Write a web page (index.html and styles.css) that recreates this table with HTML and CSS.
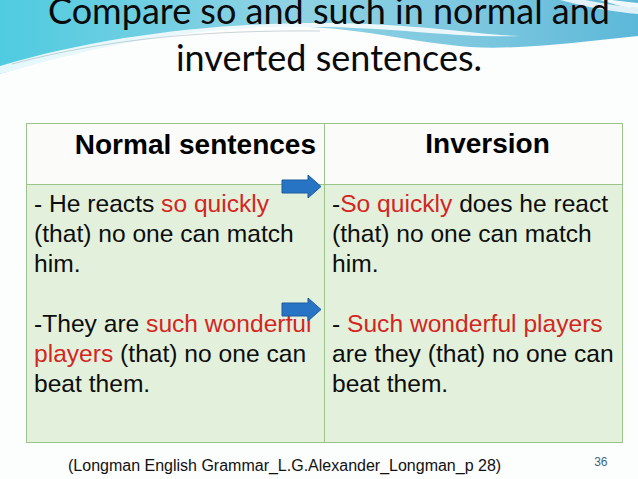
FILE: index.html
```html
<!DOCTYPE html>
<html>
<head>
<meta charset="utf-8">
<link rel="stylesheet" href="styles.css">
</head>
<body>
<div class="slide">
  <svg class="wave" width="638" height="110" viewBox="0 0 638 110">
    <defs>
      <linearGradient id="cy" x1="0" y1="0" x2="1" y2="0">
        <stop offset="0" stop-color="#4fcbe0"/>
        <stop offset="0.45" stop-color="#8fd2e4"/>
        <stop offset="0.75" stop-color="#7cc7df"/>
        <stop offset="1" stop-color="#5cb8d9"/>
      </linearGradient>
      <linearGradient id="ar" x1="0" y1="0" x2="0" y2="1">
        <stop offset="0" stop-color="#3384d6"/>
        <stop offset="1" stop-color="#1d63b2"/>
      </linearGradient>
    </defs>
    <path d="M0,0 H638 V36 C580,42 520,50 470,47 C410,42 370,30 310,27 C200,25 100,45 0,74 Z" fill="url(#cy)"/>
    <path d="M0,66 C100,36 220,22 330,23 C420,24 470,34 520,36 C460,38 420,30 330,27 C220,26 110,44 0,74 Z" fill="#ffffff" opacity="0.85"/>
    <path d="M12,64 C110,38 210,30 320,31" fill="none" stroke="#8fa6b0" stroke-width="0.8" opacity="0.6"/>
    <path d="M560,0 C590,8 615,12 638,14 V8 C620,6 600,3 585,0 Z" fill="#ffffff" opacity="0.8"/>
    <path d="M600,0 C615,5 628,8 638,8 V3 C628,2 620,1 612,0 Z" fill="#ffffff" opacity="0.9"/>
  </svg>

  <h1 class="title">Compare so and such in normal and<br>inverted sentences.</h1>

  <div class="grid">
    <div class="cell head head-left">Normal sentences</div>
    <div class="cell head head-right">Inversion</div>
    <div class="cell body">
      <p>- He reacts <span class="red">so quickly</span> (that) no one can match him.</p>
      <p>-They are <span class="red">such wonderful players</span> (that) no one can beat them.</p>
    </div>
    <div class="cell body body-right">
      <p>-<span class="red">So quickly</span> does he react (that) no one can match him.</p>
      <p>- <span class="red">Such wonderful players</span> are they (that) no one can beat them.</p>
    </div>
    <svg class="arrow arrow-one" width="42" height="26" viewBox="0 0 42 26">
      <path d="M1,6 H27 V1 L40,12.5 L27,24 V19 H1 Z" fill="#2874c4" stroke="#1b5a9e" stroke-width="1"/>
    </svg>
    <svg class="arrow arrow-two" width="42" height="26" viewBox="0 0 42 26">
      <path d="M1,6 H27 V1 L40,12.5 L27,24 V19 H1 Z" fill="#2874c4" stroke="#1b5a9e" stroke-width="1"/>
    </svg>
  </div>

  <div class="foot">
    <span class="src">(Longman English Grammar_L.G.Alexander_Longman_p 28)</span>
    <span class="num">36</span>
  </div>
</div>
</body>
</html>
```

FILE: styles.css
```css
html, body {
  margin: 0;
  padding: 0;
  background: #fdfdfd;
}

.slide {
  position: relative;
  width: 638px;
  height: 479px;
  overflow: hidden;
  background: #fcfdfd;
}

.wave {
  position: absolute;
  left: 0;
  top: 0;
}

.title {
  position: relative;
  margin: -13px 0 0 20px;
  font-family: Lato, "Open Sans", sans-serif;
  font-weight: normal;
  font-size: 36px;
  line-height: 47px;
  text-align: center;
  color: #0a0a0a;
}

.grid {
  position: relative;
  margin: 42px 0 0 26px;
  width: 597px;
  box-sizing: border-box;
  border: 1px solid #9cc38a;
  display: grid;
  grid-template-columns: 297px 1fr;
  grid-template-rows: 61px 257px;
  font-family: "Liberation Sans", Arial, sans-serif;
}

.cell {
  box-sizing: border-box;
}

.head {
  background: #fbfcfa;
  border-bottom: 1px solid #9cc38a;
  font-weight: bold;
  font-size: 28px;
  color: #000;
  padding-top: 5px;
}

.head-left {
  text-align: right;
  padding-right: 8px;
}

.head-right {
  border-left: 1px solid #9cc38a;
  text-align: center;
  padding-left: 28px;
  padding-top: 4px;
}

.body {
  background: #e3f1dc;
  padding: 4px 3px 0 7px;
  font-size: 24.6px;
  line-height: 30px;
  color: #0d0d0d;
}

.body-right {
  border-left: 1px solid #9cc38a;
  padding-left: 7px;
}

.body p {
  margin: 0 0 30px 0;
}

.red {
  color: #d4261f;
}

.arrow {
  position: absolute;
  left: 254px;
}

.arrow-one {
  top: 50px;
}

.arrow-two {
  top: 173px;
}

.foot {
  display: flex;
  align-items: baseline;
  margin-top: 14px;
  padding-left: 68px;
  font-family: "Liberation Sans", Arial, sans-serif;
}

.src {
  font-size: 16px;
  color: #111;
}

.num {
  margin-left: 93px;
  font-size: 12px;
  color: #3f6680;
  position: relative;
  top: -5px;
}
```
